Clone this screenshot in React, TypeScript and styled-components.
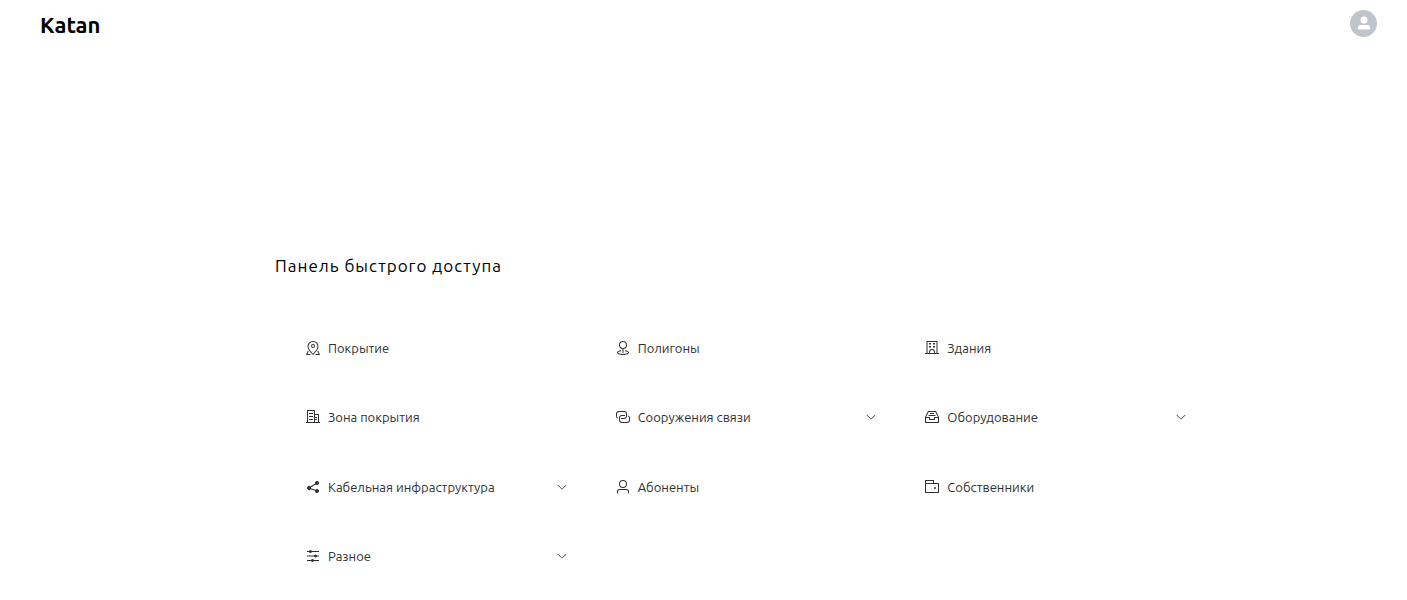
import React from 'react';
import styled, { createGlobalStyle } from 'styled-components';

const GlobalStyle = createGlobalStyle`
  * { box-sizing: border-box; }
  body {
    margin: 0;
    background: #fff;
    color: #303133;
    font-family: Ubuntu, "Noto Sans", "Open Sans", sans-serif;
  }
`;

const Header = styled.header`
  display: flex;
  align-items: center;
  justify-content: space-between;
  height: 46px;
  padding: 0 30px 0 40px;
`;

const Brand = styled.a`
  color: #000;
  font-size: 22px;
  font-weight: 700;
  line-height: 28px;
  text-decoration: none;
  padding-top: 4px;
`;

const AvatarButton = styled.button`
  display: flex;
  align-items: center;
  justify-content: center;
  width: 27px;
  height: 27px;
  padding: 0;
  border: 0;
  border-radius: 50%;
  background: #c0c4cc;
  color: #fff;
  cursor: pointer;
`;

const Main = styled.main`
  padding: 206px 203px 0 275px;
`;

const Title = styled.h1`
  margin: 0;
  color: #000;
  font-size: 17px;
  font-weight: 400;
  line-height: 28px;
  letter-spacing: 1px;
`;

const Grid = styled.nav`
  display: grid;
  grid-template-columns: repeat(3, 1fr);
  grid-template-rows: repeat(4, 1fr);
  height: 278px;
  margin-top: 33px;
`;

const Item = styled.button`
  display: flex;
  align-items: center;
  gap: 7px;
  padding: 0 17px 0 30px;
  border: 0;
  background: none;
  color: inherit;
  font-family: inherit;
  font-size: 13px;
  line-height: 20px;
  text-align: left;
  white-space: nowrap;
  cursor: pointer;
`;

const Label = styled.span`
  flex: 1;
`;

const Glyph = styled.svg<{ $size: number }>`
  flex: none;
  width: ${({ $size }) => $size}px;
  height: ${({ $size }) => $size}px;
  fill: currentColor;
`;

const icons = {
  coverage:
    'M800 416a288 288 0 1 0-576 0c0 118.144 94.528 272.128 288 456.576C705.472 688.128 800 534.144 800 416zM512 960C277.312 746.688 160 565.312 160 416a352 352 0 0 1 704 0c0 149.312-117.312 330.688-352 544zM512 448a64 64 0 1 0 0-128 64 64 0 0 0 0 128zm0 64a128 128 0 1 1 0-256 128 128 0 0 1 0 256zM235.328 704 158.528 896H352v64H64l102.400-256zM788.672 704 865.472 896H672v64H960L857.600 704z',
  polygon:
    'M512 512a192 192 0 1 0 0-384 192 192 0 0 0 0 384zm0 64a256 256 0 1 1 0-512 256 256 0 0 1 0 512zM512 512a32 32 0 0 1 32 32v256a32 32 0 1 1-64 0V544a32 32 0 0 1 32-32zM384 649.088v64.960C269.760 732.352 192 771.904 192 800c0 37.696 139.904 96 320 96s320-58.304 320-96c0-28.160-77.760-67.648-192-85.952v-64.960C789.120 671.040 896 730.368 896 800c0 88.320-171.904 160-384 160s-384-71.680-384-160c0-69.696 106.880-128.960 256-150.912z',
  building:
    'M224 128v704h576V128H224zm-32-64h640a32 32 0 0 1 32 32v768a32 32 0 0 1-32 32H192a32 32 0 0 1-32-32V96a32 32 0 0 1 32-32zM64 832h896v64H64zm256-640h128v96H320zM384 832h256v-64a128 128 0 1 0-256 0v64zm128-256a192 192 0 0 1 192 192v128H320V768a192 192 0 0 1 192-192zM320 384h128v96H320zm256-192h128v96H576zm0 192h128v96H576z',
  zone:
    'M192 128v704h384V128H192zm-32-64h448a32 32 0 0 1 32 32v768a32 32 0 0 1-32 32H160a32 32 0 0 1-32-32V96a32 32 0 0 1 32-32zM256 256h256v64H256v-64zm0 192h256v64H256v-64zm0 192h256v64H256v-64zm384-128h128v64H640v-64zm0 128h128v64H640v-64zM64 832h896v64H64v-64zM640 384v448h192V384H640zm-32-64h256a32 32 0 0 1 32 32v512a32 32 0 0 1-32 32H608a32 32 0 0 1-32-32V352a32 32 0 0 1 32-32z',
  links:
    'M640 384v64H448a128 128 0 0 0-128 128v128a128 128 0 0 0 128 128h320a128 128 0 0 0 128-128V576a128 128 0 0 0-64-110.848V394.880c74.560 26.368 128 97.472 128 181.056v128a192 192 0 0 1-192 192H448a192 192 0 0 1-192-192V576a192 192 0 0 1 192-192h192zM384 640v-64h192a128 128 0 0 0 128-128V320a128 128 0 0 0-128-128H256a128 128 0 0 0-128 128v128a128 128 0 0 0 64 110.848v70.272A192.064 192.064 0 0 1 64 448V320a192 192 0 0 1 192-192h320a192 192 0 0 1 192 192v128a192 192 0 0 1-192 192H384z',
  equipment:
    'M288 384h448v64H288v-64zm96-128h256v64H384v-64zM131.456 512H384v128h256V512h252.544L721.856 192H302.144L131.456 512zM896 576H704v128H320V576H128v256h768V576zM275.776 128h472.448a32 32 0 0 1 28.608 17.664l179.840 359.552A32 32 0 0 1 960 519.552V864a32 32 0 0 1-32 32H96a32 32 0 0 1-32-32V519.552a32 32 0 0 1 3.392-14.336l179.776-359.552A32 32 0 0 1 275.776 128z',
  cable:
    'm679.872 348.800-301.760 188.608a127.808 127.808 0 0 1 5.120 52.160l279.936 104.960a128 128 0 1 1-22.464 59.904l-279.872-104.960a128 128 0 1 1-16.640-166.272l301.696-188.608a128 128 0 1 1 33.920 54.272z',
  user:
    'M512 512a192 192 0 1 0 0-384 192 192 0 0 0 0 384zm0 64a256 256 0 1 1 0-512 256 256 0 0 1 0 512zm320 320v-96a96 96 0 0 0-96-96H288a96 96 0 0 0-96 96v96a32 32 0 1 1-64 0v-96a160 160 0 0 1 160-160h448a160 160 0 0 1 160 160v96a32 32 0 1 1-64 0z',
  wallet:
    'M640 288h-64V128H128v704h384v32a32 32 0 0 0 32 32H96a32 32 0 0 1-32-32V96a32 32 0 0 1 32-32h512a32 32 0 0 1 32 32v192zM128 320v512h768V320H128zm-32-64h832a32 32 0 0 1 32 32v576a32 32 0 0 1-32 32H96a32 32 0 0 1-32-32V288a32 32 0 0 1 32-32zM704 640a64 64 0 1 1 0-128 64 64 0 0 1 0 128z',
  settings:
    'M389.440 768a96.064 96.064 0 0 1 181.120 0H896v64H570.560a96.064 96.064 0 0 1-181.120 0H128v-64h261.440zm192-288a96.064 96.064 0 0 1 181.120 0H896v64H762.560a96.064 96.064 0 0 1-181.120 0H128v-64h453.440zm-320-288a96.064 96.064 0 0 1 181.120 0H896v64H442.560a96.064 96.064 0 0 1-181.120 0H128v-64h133.440z',
  chevron:
    'M831.872 340.864 512 652.672 192.128 340.864a30.592 30.592 0 0 0-42.752 0 29.120 29.120 0 0 0 0 41.600L489.664 714.240a32 32 0 0 0 44.672 0l340.288-331.712a29.120 29.120 0 0 0 0-41.728 30.592 30.592 0 0 0-42.752 0z',
  profile:
    'M288 320a224 224 0 1 0 448 0 224 224 0 1 0-448 0zm544 608H160a32 32 0 0 1-32-32v-96a160 160 0 0 1 160-160h448a160 160 0 0 1 160 160v96a32 32 0 0 1-32 32z',
};

type IconName = keyof typeof icons;

function Icon({ name, size = 16 }: { name: IconName; size?: number }) {
  return (
    <Glyph $size={size} viewBox="0 0 1024 1024" aria-hidden="true">
      <path d={icons[name]} />
    </Glyph>
  );
}

type Entry = { icon: IconName; label: string; expandable?: boolean };

const entries: Entry[] = [
  { icon: 'coverage', label: 'Покрытие' },
  { icon: 'polygon', label: 'Полигоны' },
  { icon: 'building', label: 'Здания' },
  { icon: 'zone', label: 'Зона покрытия' },
  { icon: 'links', label: 'Сооружения связи', expandable: true },
  { icon: 'equipment', label: 'Оборудование', expandable: true },
  { icon: 'cable', label: 'Кабельная инфраструктура', expandable: true },
  { icon: 'user', label: 'Абоненты' },
  { icon: 'wallet', label: 'Собственники' },
  { icon: 'settings', label: 'Разное', expandable: true },
];

export default function App() {
  return (
    <>
      <GlobalStyle />
      <Header>
        <Brand href="#">Katan</Brand>
        <AvatarButton type="button" aria-label="Профиль">
          <Icon name="profile" />
        </AvatarButton>
      </Header>
      <Main>
        <Title>Панель быстрого доступа</Title>
        <Grid aria-label="Панель быстрого доступа">
          {entries.map(({ icon, label, expandable }) => (
            <Item key={label} type="button" aria-expanded={expandable ? false : undefined}>
              <Icon name={icon} />
              <Label>{label}</Label>
              {expandable && <Icon name="chevron" size={12} />}
            </Item>
          ))}
        </Grid>
      </Main>
    </>
  );
}
